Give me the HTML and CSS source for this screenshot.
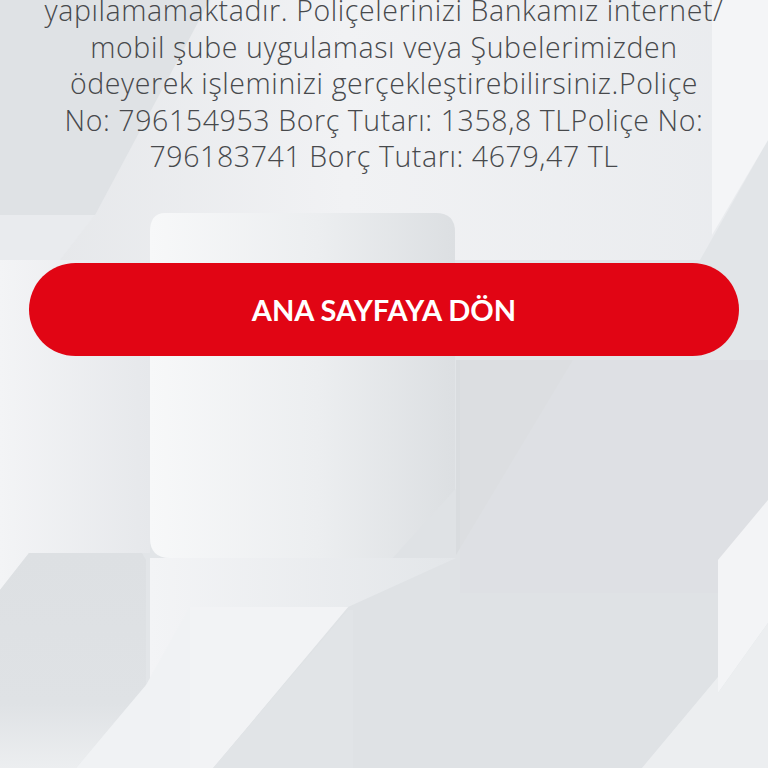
FILE: index.html
```html
<!DOCTYPE html>
<html lang="tr">
<head>
<meta charset="utf-8">
<title>Ödeme</title>
<link rel="stylesheet" href="styles.css">
</head>
<body>
<div class="page">
  <svg class="bg" viewBox="0 0 768 768" preserveAspectRatio="none" aria-hidden="true">
    <defs>
      <linearGradient id="gTop" x1="0" y1="0" x2="1" y2="0">
        <stop offset="0" stop-color="#e4e6e9"/>
        <stop offset="0.45" stop-color="#f1f2f4"/>
        <stop offset="1" stop-color="#e9ebee"/>
      </linearGradient>
      <linearGradient id="gPanel" x1="0" y1="0" x2="1" y2="0">
        <stop offset="0" stop-color="#f7f8f9"/>
        <stop offset="0.55" stop-color="#eceef0"/>
        <stop offset="1" stop-color="#dcdfe2"/>
      </linearGradient>
      <linearGradient id="gLeft" x1="0" y1="0" x2="1" y2="0">
        <stop offset="0" stop-color="#f3f4f6"/>
        <stop offset="1" stop-color="#e6e8eb"/>
      </linearGradient>
      <linearGradient id="gBL" x1="0" y1="0" x2="0" y2="1">
        <stop offset="0" stop-color="#dde0e3"/>
        <stop offset="0.7" stop-color="#dfe2e5"/>
        <stop offset="1" stop-color="#eceef0"/>
      </linearGradient>
      <linearGradient id="gMid" x1="0" y1="0" x2="1" y2="0">
        <stop offset="0" stop-color="#f3f4f6"/>
        <stop offset="1" stop-color="#e3e6e9"/>
      </linearGradient>
    </defs>
    <rect width="768" height="768" fill="#e2e5e8"/>
    <polygon points="0,0 768,0 768,140 700,260 0,260" fill="url(#gTop)"/>
    <polygon points="0,0 210,0 95,215 0,215" fill="#dfe2e5"/>
    <polygon points="0,215 95,215 60,260 0,330" fill="#e9ebee"/>
    <polygon points="712,0 768,0 768,140 712,235" fill="#f4f5f7"/>
    <polygon points="0,260 150,260 150,553 29,553 0,590" fill="url(#gLeft)"/>
    <path d="M165,213 H436 Q455,213 455,232 V558 H170 Q150,558 150,538 V232 Q150,213 165,213 Z" fill="url(#gPanel)"/>
    <polygon points="573,360 768,360 768,500 718,560 718,677 642,768 213,768 348,607" fill="#dfe2e5"/>
    <polygon points="456,360 573,360 456,555" fill="#d9dcdf"/>
    <polygon points="460,360 768,360 768,500 718,560 718,593 460,593" fill="#dde0e3" opacity="0.6"/>
    <polygon points="150,558 456,558 348,607 213,768 150,768" fill="url(#gMid)"/>
    <polygon points="190,607 348,607 213,768 190,768" fill="#f2f3f5"/>
    <polygon points="348,610 353,610 353,768 213,768" fill="#e1e4e7"/>
    <polygon points="29,553 142,553 146,560 146,685 76,768 0,768 0,590" fill="url(#gBL)"/>
    <polygon points="146,685 190,607 190,768 76,768" fill="#f0f2f4"/>
    <polygon points="768,500 768,623 718,693 718,560" fill="#f3f4f6"/>
    <polygon points="768,623 768,768 642,768 718,677 718,693" fill="#eceef0"/>
  </svg>

  <main class="content">
    <p class="message">yapılamamaktadır. Poliçelerinizi Bankamız internet/<br>mobil şube uygulaması veya Şubelerimizden<br>ödeyerek işleminizi gerçekleştirebilirsiniz.Poliçe<br>No: 796154953 Borç Tutarı: 1358,8 TLPoliçe No:<br>796183741 Borç Tutarı: 4679,47 TL</p>
    <button class="home-btn" type="button">ANA SAYFAYA DÖN</button>
  </main>
</div>
</body>
</html>
```

FILE: styles.css
```css
html, body {
  margin: 0;
  padding: 0;
}

body {
  width: 768px;
  height: 768px;
  overflow: hidden;
  font-family: "Open Sans", "Lato", sans-serif;
}

.page {
  position: relative;
  width: 768px;
  height: 768px;
  overflow: hidden;
  background: #e6e8eb;
}

.bg {
  position: absolute;
  left: 0;
  top: 0;
  width: 768px;
  height: 768px;
  z-index: 0;
}

.content {
  position: relative;
  z-index: 1;
  display: flex;
  flex-direction: column;
  align-items: stretch;
  padding: 0 29px;
}

.message {
  margin: -8px -20px 0;
  white-space: nowrap;
  text-align: center;
  font-family: "Open Sans", sans-serif;
  font-weight: 300;
  font-size: 28.5px;
  letter-spacing: 0.6px;
  line-height: 36.6px;
  color: #47494c;
}

.home-btn {
  margin-top: 88px;
  height: 93px;
  border: none;
  border-radius: 47px;
  background: #e10514;
  color: #ffffff;
  font-family: "Lato", sans-serif;
  font-weight: 700;
  font-size: 29px;
  letter-spacing: 0;
  cursor: pointer;
}
```
